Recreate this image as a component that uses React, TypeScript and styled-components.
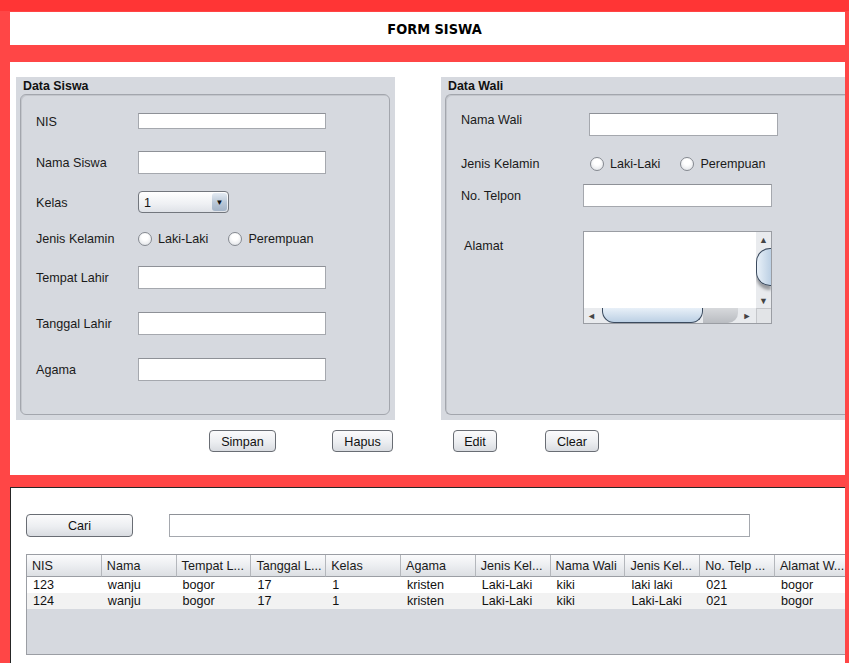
import React from "react";
import styled, { createGlobalStyle } from "styled-components";

const GlobalStyle = createGlobalStyle`
  html, body {
    margin: 0;
    padding: 0;
    background: #ff4646;
  }
  body {
    font-family: "Liberation Sans", Arial, sans-serif;
    font-size: 12.6px;
    color: #141414;
  }
`;

const Frame = styled.div`
  width: 849px;
  height: 663px;
  box-sizing: border-box;
  overflow: hidden;
  background: #ff4646;
  border-top: 11px solid #ff3535;
  padding: 1px 4px 0 10px;
  display: flex;
  flex-direction: column;
`;

const Header = styled.div`
  height: 33px;
  padding: 1px 0 0 14px;
  box-sizing: border-box;
  background: #fff;
  display: flex;
  align-items: center;
  justify-content: center;
  font-family: "DejaVu Sans Condensed", "Liberation Sans", sans-serif;
  font-weight: bold;
  font-size: 14.4px;
  color: #000;
`;

const Main = styled.div`
  margin-top: 17px;
  height: 413px;
  background: #fff;
  padding: 15px 0 0 6px;
  box-sizing: border-box;
  overflow: hidden;
`;

const PanelRow = styled.div`
  display: flex;
  gap: 46px;
`;

const Panel = styled.div<{ $w?: number }>`
  ${(p) => (p.$w ? `width: ${p.$w}px;` : "flex: 1;")}
  height: 343px;
  background: #d6d9df;
  display: flex;
  flex-direction: column;
  box-sizing: border-box;
  padding: 0 ${(p) => (p.$w ? 5 : 0)}px 5px 4px;
`;

const PanelTitle = styled.div`
  height: 17px;
  line-height: 18px;
  padding-left: 3px;
  font-weight: bold;
  font-size: 12.4px;
  color: #111;
`;

const PanelBox = styled.div<{ $open?: boolean }>`
  flex: 1;
  border: 1px solid #a3a6ad;
  border-radius: 6px;
  ${(p) => (p.$open ? "border-right: none; border-top-right-radius: 0; border-bottom-right-radius: 0;" : "")}
  box-shadow: inset 1px 1px 0 #c3c6cc;
  padding: 1px 0 0 15px;
  display: flex;
  flex-direction: column;
`;

const Row = styled.div<{ $mt: number; $h: number; $top?: boolean }>`
  display: flex;
  align-items: ${(p) => (p.$top ? "flex-start" : "center")};
  margin-top: ${(p) => p.$mt}px;
  height: ${(p) => p.$h}px;
`;

const Label = styled.div<{ $w: number; $pt?: number; $pl?: number }>`
  width: ${(p) => p.$w}px;
  flex-shrink: 0;
  box-sizing: border-box;
  padding-top: ${(p) => p.$pt ?? 1}px;
  padding-left: ${(p) => p.$pl ?? 0}px;
  color: #1a1a1a;
`;

const TextField = styled.div<{ $w: number; $h: number }>`
  width: ${(p) => p.$w}px;
  height: ${(p) => p.$h}px;
  box-sizing: border-box;
  background: #fff;
  border: 1px solid #a5a8ae;
  border-top-color: #8e9197;
`;

const Combo = styled.div`
  width: 91px;
  height: 22px;
  box-sizing: border-box;
  border: 1px solid #72767d;
  border-radius: 4px;
  background: linear-gradient(#ffffff, #eef0f3 60%, #dfe2e7);
  display: flex;
  align-items: center;
  justify-content: space-between;
  padding: 1px 1px 0 5px;
`;

const ComboArrow = styled.div`
  width: 15px;
  height: 18px;
  margin-top: -1px;
  border-radius: 3px;
  background: linear-gradient(#e4ebf3, #b8c6d6 55%, #a4b4c7);
  display: flex;
  align-items: center;
  justify-content: center;
  font-size: 8px;
  color: #111;
`;

const RadioGroup = styled.div`
  display: flex;
  gap: 20px;
  padding-top: 1px;
`;

const RadioItem = styled.label`
  display: flex;
  align-items: center;
  gap: 6px;
  color: #1a1a1a;
`;

const RadioCircle = styled.span`
  width: 14px;
  height: 14px;
  box-sizing: border-box;
  border-radius: 50%;
  border: 1px solid #858990;
  background: radial-gradient(circle at 50% 35%, #ffffff 30%, #dadde2 100%);
`;

const ScrollArea = styled.div`
  width: 189px;
  height: 93px;
  box-sizing: border-box;
  border: 1px solid #9a9da3;
  background: #fff;
  display: grid;
  grid-template-columns: 1fr 15px;
  grid-template-rows: 1fr 15px;
`;

const VBar = styled.div`
  background: #e9ebee;
  display: flex;
  flex-direction: column;
  align-items: center;
  overflow: hidden;
`;

const HBar = styled.div`
  background: #e9ebee;
  display: flex;
  align-items: center;
  overflow: hidden;
`;

const Arrow = styled.div<{ $h?: number; $w?: number }>`
  width: ${(p) => p.$w ?? 15}px;
  height: ${(p) => p.$h ?? 15}px;
  flex-shrink: 0;
  display: flex;
  align-items: center;
  justify-content: center;
  font-size: 9px;
  color: #444;
`;

const VThumb = styled.div`
  width: 15px;
  height: 38px;
  margin-top: 1px;
  box-sizing: border-box;
  border: 1px solid #3a4a5e;
  border-right: none;
  border-radius: 14px 0 0 14px;
  background: linear-gradient(90deg, #e8f0f8, #bcd0e4);
  box-shadow: 0 4px 3px #9a9ca0;
`;

const VTrack = styled.div`
  flex: 1;
`;

const HThumb = styled.div`
  width: 102px;
  height: 15px;
  margin-left: 3px;
  box-sizing: border-box;
  border: 1px solid #3a4a5e;
  border-top: none;
  border-radius: 0 0 12px 12px;
  background: linear-gradient(#e8f0f8, #bcd0e4);
`;

const HShadow = styled.div`
  width: 36px;
  height: 15px;
  border-radius: 0 0 10px 0;
  background: linear-gradient(#d7d9dc, #b9bcc1);
`;

const Corner = styled.div`
  background: #e2e4e7;
  border-left: 1px solid #c5c7cb;
  border-top: 1px solid #c5c7cb;
`;

const ButtonRow = styled.div`
  display: flex;
  margin-top: 10px;
`;

const Button = styled.button<{ $w: number; $ml: number; $h?: number }>`
  width: ${(p) => p.$w}px;
  height: ${(p) => p.$h ?? 22}px;
  margin-left: ${(p) => p.$ml}px;
  padding: 1px 0 0;
  box-sizing: border-box;
  border: 1px solid #696d74;
  border-radius: 4px;
  background: linear-gradient(#fbfbfc, #eceef1 55%, #d9dce1);
  font-family: "Liberation Sans", Arial, sans-serif;
  font-size: 12.6px;
  color: #111;
`;

const Bottom = styled.div`
  margin-top: 12px;
  flex: 1;
  background: #fff;
  border-top: 1px solid #262626;
  border-left: 1px solid #262626;
  padding: 26px 0 0 15px;
  overflow: hidden;
`;

const SearchRow = styled.div`
  display: flex;
  align-items: center;
  gap: 36px;
`;

const Table = styled.div`
  margin-top: 17px;
  width: 830px;
  height: 101px;
  box-sizing: border-box;
  border: 1px solid #9b9ea4;
  background: #d6d9df;
`;

const TableGrid = styled.div`
  display: grid;
  grid-template-columns: repeat(11, 74.8px);
`;

const HeadCell = styled.div`
  height: 22px;
  box-sizing: border-box;
  padding: 1px 0 0 5px;
  display: flex;
  align-items: center;
  background: linear-gradient(#fbfbfc, #eceef1 50%, #dcdfe3);
  border-right: 1px solid #b4b7bc;
  border-bottom: 1px solid #9b9ea4;
  color: #1a1a1a;
  white-space: nowrap;
  overflow: hidden;
`;

const Cell = styled.div<{ $alt?: boolean }>`
  height: 16px;
  line-height: 17px;
  padding-left: 6px;
  background: ${(p) => (p.$alt ? "#f2f2f2" : "#fff")};
  color: #111;
  white-space: nowrap;
  overflow: hidden;
`;

const headers = [
  "NIS",
  "Nama",
  "Tempat L...",
  "Tanggal L...",
  "Kelas",
  "Agama",
  "Jenis Kel...",
  "Nama Wali",
  "Jenis Kel...",
  "No. Telp ...",
  "Alamat W...",
];

const rows = [
  ["123", "wanju", "bogor", "17", "1", "kristen", "Laki-Laki", "kiki", "laki laki", "021", "bogor"],
  ["124", "wanju", "bogor", "17", "1", "kristen", "Laki-Laki", "kiki", "Laki-Laki", "021", "bogor"],
];

const Gender = () => (
  <RadioGroup>
    <RadioItem>
      <RadioCircle />
      Laki-Laki
    </RadioItem>
    <RadioItem>
      <RadioCircle />
      Perempuan
    </RadioItem>
  </RadioGroup>
);

const App = () => {
  return (
    <>
      <GlobalStyle />
      <Frame>
        <Header>FORM SISWA</Header>
        <Main>
          <PanelRow>
            <Panel $w={379}>
              <PanelTitle>Data Siswa</PanelTitle>
              <PanelBox>
                <Row $mt={17} $h={16}>
                  <Label $w={102}>NIS</Label>
                  <TextField $w={188} $h={16} />
                </Row>
                <Row $mt={22} $h={23}>
                  <Label $w={102}>Nama Siswa</Label>
                  <TextField $w={188} $h={23} />
                </Row>
                <Row $mt={17} $h={22}>
                  <Label $w={102}>Kelas</Label>
                  <Combo>
                    1<ComboArrow>▼</ComboArrow>
                  </Combo>
                </Row>
                <Row $mt={16} $h={18}>
                  <Label $w={102}>Jenis Kelamin</Label>
                  <Gender />
                </Row>
                <Row $mt={19} $h={23}>
                  <Label $w={102}>Tempat Lahir</Label>
                  <TextField $w={188} $h={23} />
                </Row>
                <Row $mt={23} $h={23}>
                  <Label $w={102}>Tanggal Lahir</Label>
                  <TextField $w={188} $h={23} />
                </Row>
                <Row $mt={23} $h={23}>
                  <Label $w={102}>Agama</Label>
                  <TextField $w={188} $h={23} />
                </Row>
              </PanelBox>
            </Panel>
            <Panel>
              <PanelTitle>Data Wali</PanelTitle>
              <PanelBox $open>
                <Row $mt={17} $h={23} $top>
                  <Label $w={128} $pt={0}>
                    Nama Wali
                  </Label>
                  <TextField $w={189} $h={23} />
                </Row>
                <Row $mt={18} $h={18}>
                  <Label $w={129}>Jenis Kelamin</Label>
                  <Gender />
                </Row>
                <Row $mt={12} $h={23}>
                  <Label $w={122}>No. Telpon</Label>
                  <TextField $w={189} $h={23} />
                </Row>
                <Row $mt={24} $h={93} $top>
                  <Label $w={122} $pt={8} $pl={3}>
                    Alamat
                  </Label>
                  <ScrollArea>
                    <div />
                    <VBar>
                      <Arrow>▲</Arrow>
                      <VThumb />
                      <VTrack />
                      <Arrow>▼</Arrow>
                    </VBar>
                    <HBar>
                      <Arrow>◄</Arrow>
                      <HThumb />
                      <HShadow />
                      <Arrow $w={18}>►</Arrow>
                    </HBar>
                    <Corner />
                  </ScrollArea>
                </Row>
              </PanelBox>
            </Panel>
          </PanelRow>
          <ButtonRow>
            <Button $w={67} $ml={193}>
              Simpan
            </Button>
            <Button $w={61} $ml={56}>
              Hapus
            </Button>
            <Button $w={44} $ml={60}>
              Edit
            </Button>
            <Button $w={54} $ml={48}>
              Clear
            </Button>
          </ButtonRow>
        </Main>
        <Bottom>
          <SearchRow>
            <Button $w={107} $ml={0} $h={23}>
              Cari
            </Button>
            <TextField $w={581} $h={23} />
          </SearchRow>
          <Table>
            <TableGrid>
              {headers.map((h, i) => (
                <HeadCell key={i}>{h}</HeadCell>
              ))}
              {rows.map((r, ri) =>
                r.map((c, ci) => (
                  <Cell key={`${ri}-${ci}`} $alt={ri === 1}>
                    {c}
                  </Cell>
                ))
              )}
            </TableGrid>
          </Table>
        </Bottom>
      </Frame>
    </>
  );
};

export default App;
